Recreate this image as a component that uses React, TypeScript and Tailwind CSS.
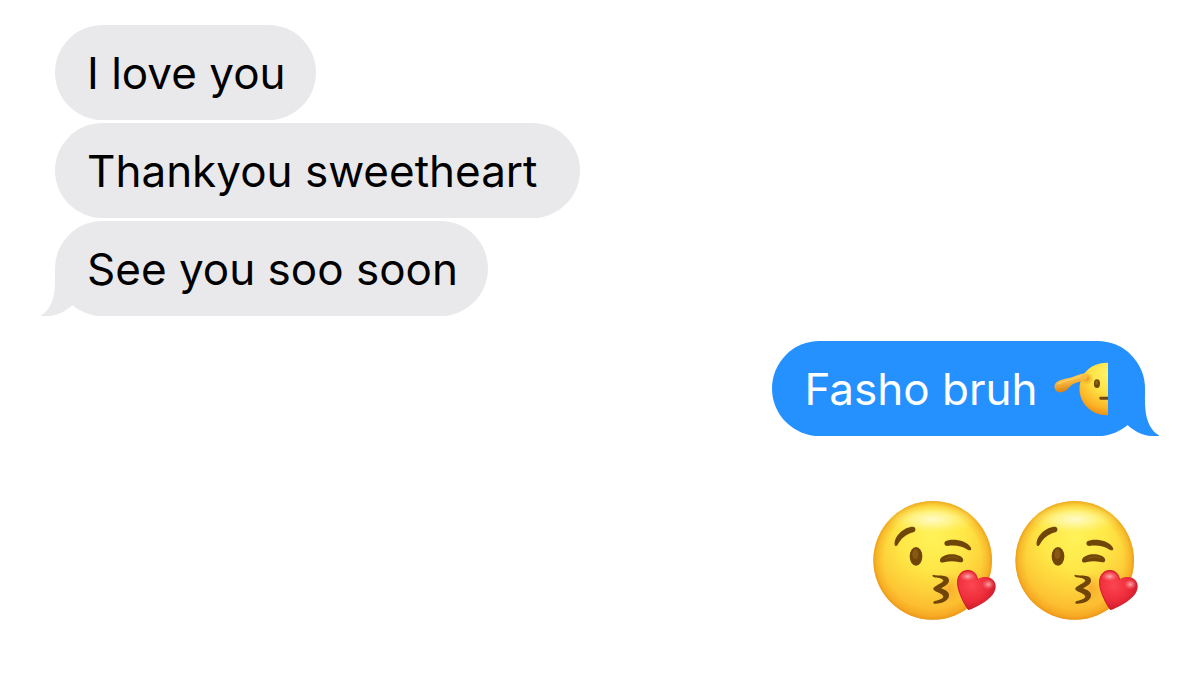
import type { ReactNode } from 'react';
import clsx from 'clsx';

interface BubbleProps {
  children: ReactNode;
  sent?: boolean;
  tail?: boolean;
}

/** Curved tail at the bottom corner of the last bubble in a group */
function Tail({ sent }: { sent?: boolean }) {
  return (
    <svg
      viewBox="33 175 135 144"
      aria-hidden="true"
      className={clsx(
        'absolute bottom-0 h-12 w-[45px]',
        sent ? '-right-3.5 -scale-x-100 text-[#2491ff]' : '-left-3.5 text-[#e9e9eb]'
      )}
    >
      <path
        fill="currentColor"
        d="M75 175C75 198 76 215 74 237C71 280 52 308 31 318C68 324 101 309 125 288L165 240V175Z"
      />
    </svg>
  );
}

function Bubble({ children, sent, tail }: BubbleProps) {
  return (
    <div
      className={clsx(
        'relative flex h-[95px] items-center whitespace-pre rounded-full text-[44px] leading-none',
        sent
          ? 'self-end bg-[#2491ff] pl-8 pr-[37px] text-white'
          : 'self-start bg-[#e9e9eb] pl-8 pr-[30px] text-black'
      )}
    >
      {tail && <Tail sent={sent} />}
      <div className="relative flex items-center gap-1">{children}</div>
    </div>
  );
}

/** Half of the saluting face */
function SaluteEmoji() {
  return (
    <svg viewBox="44 68 161 160" role="img" aria-label="Saluting face" className="h-[54px] w-[54px]">
      <defs>
        <radialGradient id="salute-face" gradientUnits="userSpaceOnUse" cx="207" cy="104" r="126">
          <stop offset="0" stopColor="#fff56a" />
          <stop offset="0.45" stopColor="#fee044" />
          <stop offset="0.8" stopColor="#fbb526" />
          <stop offset="1" stopColor="#ef8b14" />
        </radialGradient>
        <linearGradient id="salute-hand" x1="0" y1="0" x2="0.3" y2="1">
          <stop offset="0" stopColor="#ffd65a" />
          <stop offset="0.55" stopColor="#f7b53c" />
          <stop offset="1" stopColor="#d77b12" />
        </linearGradient>
        <radialGradient id="salute-shadow">
          <stop offset="0" stopColor="#d9781a" stopOpacity="0.75" />
          <stop offset="1" stopColor="#e58d1c" stopOpacity="0" />
        </radialGradient>
      </defs>
      <path fill="url(#salute-face)" d="M205 70C157 68 120 102 120 148C120 193 158 228 205 226Z" />
      <ellipse cx="142" cy="117" rx="20" ry="18" fill="url(#salute-shadow)" />
      <path
        fill="url(#salute-hand)"
        d="M137 100C144 103 147 112 141 119C128 127 113 126 100 134C91 140 80 157 66 158C52 159 43 148 46 137C50 125 65 120 81 117C101 113 117 104 137 100Z"
      />
      <path fill="none" stroke="#fff0a0" strokeWidth="4" strokeLinecap="round" opacity="0.4" d="M58 132C77 121 104 118 125 109" />
      <ellipse cx="172" cy="132" rx="9" ry="13" fill="#704707" />
      <ellipse cx="171" cy="129" rx="4" ry="6" fill="#8c6518" />
      <path fill="#704707" d="M205 171H183Q179 171 179 175Q179 180 183 180H205Z" />
    </svg>
  );
}

/** Winking face blowing a kiss */
function KissEmoji({ id }: { id: string }) {
  return (
    <svg viewBox="24 30 372 363" role="img" aria-label="Face blowing a kiss" className="h-[121px] w-[124px]">
      <defs>
        <radialGradient id={`${id}-face`} gradientUnits="userSpaceOnUse" cx="203" cy="140" r="250">
          <stop offset="0" stopColor="#fff258" />
          <stop offset="0.38" stopColor="#ffe847" />
          <stop offset="0.66" stopColor="#fdd039" />
          <stop offset="0.9" stopColor="#fcb92e" />
          <stop offset="1" stopColor="#f9ad2c" />
        </radialGradient>
        <radialGradient id={`${id}-edge`} gradientUnits="userSpaceOnUse" cx="203" cy="211" r="178">
          <stop offset="0.82" stopColor="#ee9612" stopOpacity="0" />
          <stop offset="0.94" stopColor="#ee9612" stopOpacity="0.35" />
          <stop offset="1" stopColor="#e3890f" stopOpacity="0.65" />
        </radialGradient>
        <radialGradient id={`${id}-shine`}>
          <stop offset="0" stopColor="#fffde0" stopOpacity="0.85" />
          <stop offset="0.45" stopColor="#fffbc0" stopOpacity="0.5" />
          <stop offset="1" stopColor="#fff15a" stopOpacity="0" />
        </radialGradient>
        <radialGradient id={`${id}-heart`} gradientUnits="userSpaceOnUse" cx="320" cy="285" r="84">
          <stop offset="0" stopColor="#fb4650" />
          <stop offset="0.55" stopColor="#ee2d3b" />
          <stop offset="1" stopColor="#c41526" />
        </radialGradient>
        <radialGradient id={`${id}-gloss`}>
          <stop offset="0" stopColor="#ffd0cf" stopOpacity="0.8" />
          <stop offset="1" stopColor="#ff7d83" stopOpacity="0" />
        </radialGradient>
        <radialGradient id={`${id}-blush`}>
          <stop offset="0" stopColor="#f58c22" stopOpacity="0.5" />
          <stop offset="1" stopColor="#f58c22" stopOpacity="0" />
        </radialGradient>
      </defs>
      <circle cx="203" cy="211" r="178" fill={`url(#${id}-face)`} />
      <circle cx="203" cy="211" r="178" fill={`url(#${id}-edge)`} />
      <ellipse cx="203" cy="88" rx="140" ry="46" fill={`url(#${id}-shine)`} />
      <ellipse cx="253" cy="295" rx="39" ry="46" fill={`url(#${id}-blush)`} />
      <g fill="#704508">
        <path d="M89 164C86 138 119 109 145 110C154 112 153 125 145 127C122 133 108 146 98 164C95 169 90 169 89 164Z" />
        <path d="M241 154C255 145 303 147 318 173C321 181 314 183 308 179C290 167 268 165 247 168C238 168 236 159 241 154Z" />
        <ellipse cx="153" cy="199" rx="19" ry="28" />
        <path d="M225 209C232 188 284 187 294 206C297 216 290 219 281 216C264 212 252 213 237 217C229 219 224 216 225 209Z" />
        <path d="M204 254C217 259 253 251 252 272C251 284 236 289 228 295C239 299 254 305 252 318C249 336 223 342 208 341C203 340 204 335 209 333C221 330 234 326 235 320C233 311 214 307 207 301C202 295 207 291 214 287C223 282 235 277 235 271C229 263 216 264 208 262C202 260 201 255 204 254Z" />
      </g>
      <ellipse cx="151" cy="193" rx="9" ry="15" fill="#966318" opacity="0.65" />
      <path fill="none" stroke="#9b6918" strokeWidth="3" opacity="0.6" d="M241 207C254 198 269 199 280 205" />
      <path
        fill={`url(#${id}-heart)`}
        d="M311 360C302 353 275 304 276 276C277 253 292 239 310 240C327 241 336 252 339 267C350 260 369 259 381 267C396 278 395 299 383 314C367 335 329 354 311 360Z"
      />
      <ellipse cx="308" cy="259" rx="25" ry="15" fill={`url(#${id}-gloss)`} />
      <ellipse cx="370" cy="283" rx="19" ry="16" fill={`url(#${id}-gloss)`} />
      <path
        fill="none"
        stroke="#b91324"
        strokeWidth="3"
        opacity="0.55"
        d="M311 359C302 351 277 304 278 276C279 255 292 242 310 242C325 243 334 254 338 270"
      />
    </svg>
  );
}

export default function App() {
  return (
    <main className="flex min-h-screen flex-col bg-white px-[55px] pt-[25px] font-['Inter',sans-serif]">
      {/* Received */}
      <section aria-label="Received messages" className="flex flex-col gap-[3px]">
        <Bubble>I love you</Bubble>
        <Bubble>Thankyou sweetheart </Bubble>
        <Bubble tail>See you soo soon</Bubble>
      </section>

      {/* Sent */}
      <section aria-label="Sent messages" className="mt-[25px] flex flex-col">
        <Bubble sent tail>
          <span>Fasho bruh </span>
          <SaluteEmoji />
        </Bubble>
        <div className="mr-1.5 mt-16 flex gap-[18px] self-end">
          <KissEmoji id="kiss-1" />
          <KissEmoji id="kiss-2" />
        </div>
      </section>
    </main>
  );
}
